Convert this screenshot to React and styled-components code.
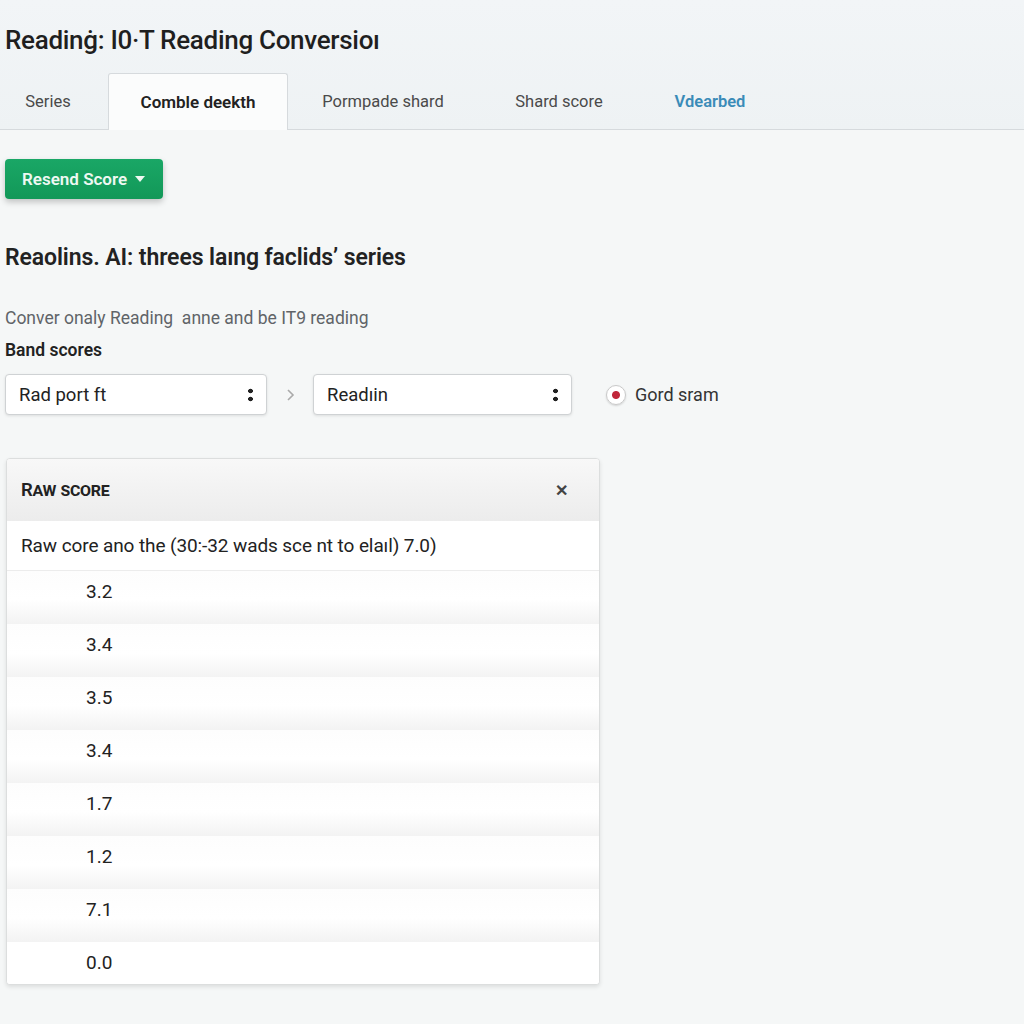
import styled, { createGlobalStyle } from "styled-components";

const GlobalStyle = createGlobalStyle`
  body {
    margin: 0;
    background: #f5f7f7;
    font-family: Roboto, "Liberation Sans", sans-serif;
    color: #222;
  }
`;

const tabs = [
  { label: "Series", w: 108, shift: 12 },
  { label: "Comble deekth", w: 180, active: true },
  { label: "Pormpade shard", w: 190 },
  { label: "Shard score", w: 162 },
  { label: "Vdearbed", w: 140, link: true },
];

const scores = ["3.2", "3.4", "3.5", "3.4", "1.7", "1.2", "7.1", "0.0"];

const App = () => {
  return (
    <>
      <GlobalStyle />
      <Header>
        <Title>Readinġ: I0·T Reading Conversioı</Title>
        <TabBar>
          {tabs.map((t) => (
            <Tab
              key={t.label}
              $w={t.w}
              $shift={t.shift || 0}
              $active={t.active}
              $link={t.link}
            >
              {t.label}
            </Tab>
          ))}
        </TabBar>
      </Header>
      <Main>
        <GreenButton>
          Resend Score
          <Caret />
        </GreenButton>
        <SubTitle>Reaolins. AI: threes laıng faclids’ series</SubTitle>
        <Desc>Conver onaly Reading&nbsp; anne and be IT9 reading</Desc>
        <Label>Band scores</Label>
        <Controls>
          <Select $w={262}>
            Rad port ft
            <Kebab />
          </Select>
          <Chevron viewBox="0 0 10 16">
            <path d="M3 3l5 5-5 5" fill="none" stroke="#aaa" strokeWidth="1.6" />
          </Chevron>
          <Select $w={259}>
            Readıin
            <Kebab />
          </Select>
          <RadioLabel>
            <Radio />
            Gord sram
          </RadioLabel>
        </Controls>
        <Card>
          <CardHead>
            <HeadTitle>Raw score</HeadTitle>
            <Close>✕</Close>
          </CardHead>
          <InfoRow>Raw core ano the (30:-32 wads sce nt to elaıl) 7.0)</InfoRow>
          {scores.map((s, i) => (
            <ScoreRow key={i}>{s}</ScoreRow>
          ))}
        </Card>
      </Main>
    </>
  );
};

export default App;

const Header = styled.div`
  background: linear-gradient(#f2f5f7, #eef2f4);
  padding-top: 24px;
`;

const Title = styled.h1`
  margin: 0 0 0 5px;
  font-size: 26px;
  font-weight: 500;
  letter-spacing: -0.3px;
  color: #1f1f1f;
  line-height: 32px;
`;

const TabBar = styled.div`
  display: flex;
  margin-top: 17px;
  border-bottom: 1px solid #d6dadd;
  height: 56px;
`;

const Tab = styled.div`
  width: ${(p) => p.$w}px;
  display: flex;
  align-items: center;
  justify-content: center;
  padding-right: ${(p) => p.$shift}px;
  font-size: ${(p) => (p.$active ? 17 : 16.5)}px;
  font-weight: ${(p) => (p.$active || p.$link ? 600 : 400)};
  color: ${(p) => (p.$link ? "#3a8bb8" : p.$active ? "#222" : "#4a4a4a")};
  box-sizing: border-box;
  ${(p) =>
    p.$active &&
    `
    background: #fbfcfc;
    border: 1px solid #d6dadd;
    border-bottom: none;
    border-radius: 3px 3px 0 0;
    margin-bottom: -1px;
    height: 57px;
  `}
`;

const Main = styled.div`
  padding: 29px 0 40px 5px;
`;

const GreenButton = styled.button`
  display: flex;
  align-items: center;
  gap: 8px;
  height: 40px;
  width: 158px;
  padding: 0 0 0 17px;
  border: none;
  border-radius: 4px;
  background: linear-gradient(#1aa766, #129858);
  color: #eef8f2;
  font-family: Roboto, "Liberation Sans", sans-serif;
  font-size: 17px;
  font-weight: 600;
  box-shadow: 0 3px 6px rgba(0, 0, 0, 0.22);
`;

const Caret = styled.span`
  width: 0;
  height: 0;
  border-left: 5px solid transparent;
  border-right: 5px solid transparent;
  border-top: 6px solid #eef8f2;
`;

const SubTitle = styled.h2`
  margin: 44px 0 0;
  font-size: 23px;
  font-weight: 600;
  line-height: 30px;
  color: #222;
  letter-spacing: -0.1px;
`;

const Desc = styled.p`
  margin: 35px 0 0;
  font-size: 17.5px;
  line-height: 20px;
  color: #606468;
`;

const Label = styled.div`
  margin-top: 12px;
  font-size: 17.5px;
  font-weight: 600;
  color: #222;
  line-height: 20px;
`;

const Controls = styled.div`
  display: flex;
  align-items: center;
  margin-top: 14px;
`;

const Select = styled.div`
  width: ${(p) => p.$w}px;
  height: 41px;
  box-sizing: border-box;
  display: flex;
  align-items: center;
  justify-content: space-between;
  padding: 0 12px 0 13px;
  background: #fff;
  border: 1px solid #cfd2d4;
  border-radius: 4px;
  box-shadow: 0 1px 3px rgba(0, 0, 0, 0.1);
  font-size: 18.5px;
  color: #222;
`;

const Kebab = styled.span`
  width: 5px;
  height: 16px;
  background: radial-gradient(circle, #222 2.1px, transparent 2.6px) 0 0 / 5px 8px
    repeat-y;
  margin-right: 1px;
`;

const Chevron = styled.svg`
  width: 10px;
  height: 16px;
  margin: 0 18px 0 18px;
`;

const RadioLabel = styled.label`
  display: flex;
  align-items: center;
  gap: 9px;
  margin-left: 34px;
  font-size: 18px;
  color: #333;
`;

const Radio = styled.span`
  width: 20px;
  height: 20px;
  box-sizing: border-box;
  border-radius: 50%;
  border: 1px solid #c9c9c9;
  background: radial-gradient(circle, #c0263a 3.5px, #fff 4.5px);
  box-shadow: 0 1px 2px rgba(0, 0, 0, 0.15);
`;

const Card = styled.div`
  width: 592px;
  margin: 43px 0 0 1px;
  background: #fff;
  border: 1px solid #dcdede;
  border-radius: 4px;
  box-shadow: 0 2px 4px rgba(0, 0, 0, 0.1);
  overflow: hidden;
`;

const CardHead = styled.div`
  height: 62px;
  display: flex;
  align-items: center;
  justify-content: space-between;
  padding: 0 31px 0 14px;
  background: linear-gradient(#f8f8f8, #ececec);
`;

const HeadTitle = styled.span`
  font-variant: small-caps;
  font-size: 18.5px;
  font-weight: 600;
  color: #222;
  letter-spacing: -0.3px;
`;

const Close = styled.span`
  font-size: 16px;
  font-weight: 600;
  color: #444;
`;

const InfoRow = styled.div`
  height: 49px;
  display: flex;
  align-items: center;
  padding-left: 14px;
  font-size: 19px;
  color: #222;
  border-bottom: 1px solid #ececec;
  letter-spacing: -0.1px;
`;

const ScoreRow = styled.div`
  height: 53px;
  box-sizing: border-box;
  padding: 10px 0 0 79px;
  font-size: 19px;
  line-height: 22px;
  color: #222;
  background: linear-gradient(#fdfdfd 0%, #fff 55%, #f3f3f3 100%);
  &:last-child {
    height: 42px;
    background: #fff;
  }
`;
